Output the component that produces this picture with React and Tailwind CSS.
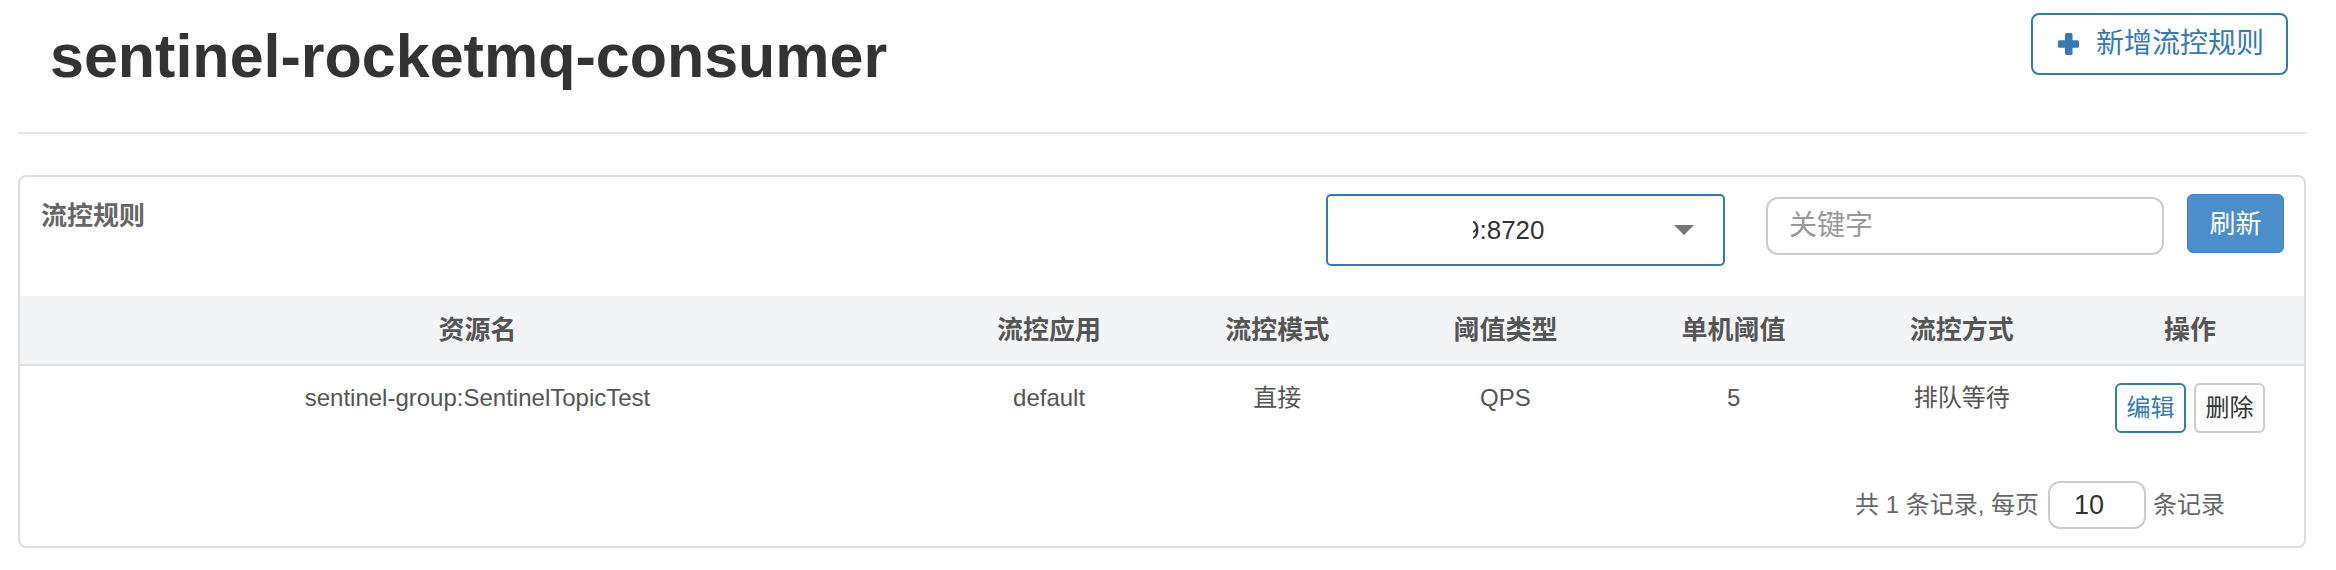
import React from "react";

const FONT = { fontFamily: '"Liberation Sans", "Noto Sans CJK SC", Arial, sans-serif' };

function PlusIcon() {
  return (
    <svg width="21" height="22" viewBox="0 0 21 22" className="shrink-0">
      <rect x="7" y="0" width="7.5" height="22" rx="1.5" fill="#337ab7" />
      <rect x="0" y="7.2" width="21" height="7.5" rx="1.5" fill="#337ab7" />
    </svg>
  );
}

const headers = ["资源名", "流控应用", "流控模式", "阈值类型", "单机阈值", "流控方式", "操作"];
const row = ["sentinel-group:SentinelTopicTest", "default", "直接", "QPS", "5", "排队等待"];

export default function App() {
  return (
    <div className="w-full h-[570px] bg-white overflow-hidden" style={FONT}>
      <div className="ml-[18px] w-[2289px]">
        {/* top bar */}
        <div className="h-[132px] flex justify-between items-start">
          <h1 className="mt-[23px] ml-[32px] text-[61px] leading-[66px] font-bold text-[#333]">
            sentinel-rocketmq-consumer
          </h1>
          <button className="mt-[13px] mr-[19px] h-[62px] w-[257px] border-2 border-[#337ab7] rounded-[8px] flex items-center pl-[25px] gap-[17px] bg-white">
            <PlusIcon />
            <span className="text-[28px] leading-[32px] text-[#337ab7]">新增流控规则</span>
          </button>
        </div>
        <div className="h-[2px] bg-[#e5e5e5]" />

        {/* panel */}
        <div className="mt-[41px] w-[2288px] h-[373px] border-2 border-[#dddddd] rounded-[8px] flex flex-col">
          <div className="h-[119px] flex items-start">
            <div className="pl-[21px] pt-[23px] text-[26px] leading-[32px] font-bold text-[#666]">流控规则</div>
            <div className="ml-auto mt-[17px] w-[399px] h-[72px] border-2 border-[#337ab7] rounded-[5px] flex items-center bg-white shadow-[inset_0_1px_2px_rgba(0,0,0,0.06)]">
              <div className="ml-[145px] overflow-hidden">
                <span className="block ml-[-8px] text-[26px] leading-[32px] text-[#333] whitespace-nowrap">9:8720</span>
              </div>
              <svg width="20" height="10" viewBox="0 0 20 10" className="ml-auto mr-[29px]">
                <polygon points="0,0 20,0 10,10" fill="#777" />
              </svg>
            </div>
            <div className="ml-[41px] mt-[20px] w-[398px] h-[58px] border-2 border-[#cccccc] rounded-[12px] flex items-center pl-[21px]">
              <span className="text-[28px] leading-[32px] text-[#999]">关键字</span>
            </div>
            <button className="ml-[23px] mr-[20px] mt-[17px] w-[97px] h-[59px] rounded-[6px] bg-[#4a8fcc] border border-[#3f84c2] flex items-center justify-center">
              <span className="text-[26px] leading-[32px] text-white">刷新</span>
            </button>
          </div>

          {/* table header */}
          <div className="grid grid-cols-[915px_repeat(6,1fr)] h-[70px] bg-[#f3f4f6] border-b-2 border-[#dddddd]">
            {headers.map((h) => (
              <div key={h} className="flex items-center justify-center text-[26px] leading-[32px] font-bold text-[#555]">
                {h}
              </div>
            ))}
          </div>

          {/* row */}
          <div className="grid grid-cols-[915px_repeat(6,1fr)] h-[115px]">
            {row.map((c, i) => (
              <div key={i} className="pt-[16px] text-center text-[24px] leading-[32px] text-[#555]">
                {c}
              </div>
            ))}
            <div className="pt-[17px] flex justify-center gap-[8px]">
              <button className="w-[71px] h-[50px] border-2 border-[#337ab7] rounded-[6px] text-[24px] leading-[30px] text-[#337ab7] bg-white">
                编辑
              </button>
              <button className="w-[71px] h-[50px] border-2 border-[#cccccc] rounded-[6px] text-[24px] leading-[30px] text-[#333] bg-white">
                删除
              </button>
            </div>
          </div>

          {/* footer */}
          <div className="flex items-center justify-end pr-[79px] h-[48px]">
            <span className="text-[24px] leading-[32px] text-[#666] whitespace-pre">共 1 条记录, 每页</span>
            <div className="ml-[9px] w-[98px] h-[48px] border-2 border-[#cccccc] rounded-[12px] flex items-center pl-[24px]">
              <span className="text-[27px] leading-[32px] text-[#333]">10</span>
            </div>
            <span className="ml-[7px] text-[24px] leading-[32px] text-[#666]">条记录</span>
          </div>
        </div>
      </div>
    </div>
  );
}
